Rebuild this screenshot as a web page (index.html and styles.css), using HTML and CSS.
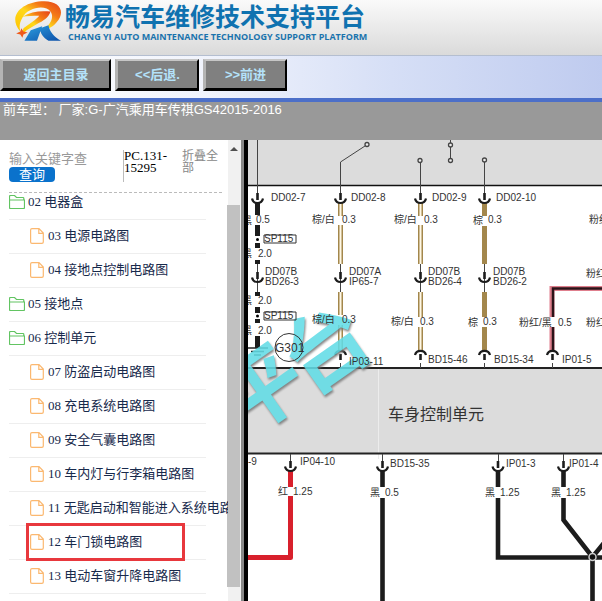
FILE: index.html
```html
<!DOCTYPE html>
<html lang="zh-CN">
<head>
<meta charset="utf-8">
<meta name="viewport" content="width=device-width, initial-scale=1">
<title>畅易汽车维修技术支持平台</title>
<link rel="stylesheet" href="styles.css">
</head>
<body>
<svg class="symbols" aria-hidden="true">
  <symbol id="folder" viewBox="0 0 16 14"><path d="M.5 12.500V1.500q0-1 1-1h4l2 2h6.500q.8 0 .8.800V5M.5 5h15v7.500q0 1-1 1H1.500q-1 0-1-1z" fill="none" stroke="#62c462" stroke-width="1.200"/></symbol>
  <symbol id="file" viewBox="0 0 14 16"><path d="M2 .6h7L13.300 5v9q0 1.400-1.400 1.400H2Q.6 15.400.6 14V2Q.6.6 2 .6zM8.800.8v4.500h4.400" fill="none" stroke="#fbb870" stroke-width="1.200"/></symbol>
</svg>

<header class="banner">
  <svg class="logo" viewBox="0 0 46 42" aria-hidden="true">
    <defs>
      <linearGradient id="flame" x1="0" y1="1" x2="1" y2="0">
        <stop offset="0" stop-color="#ffc400"/><stop offset=".45" stop-color="#ffd81a"/><stop offset=".7" stop-color="#f47a16"/><stop offset="1" stop-color="#e3401c"/>
      </linearGradient>
      <linearGradient id="sea" x1="0" y1="0" x2="1" y2="1">
        <stop offset="0" stop-color="#2ea0e0"/><stop offset="1" stop-color="#0b4fa8"/>
      </linearGradient>
    </defs>
    <path d="M7 30C-6 15 9 1 30 1c16 0 20 11 12 20-3 4-8 7-13 8 6-5 11-12 7-18C31 4 14 7 9 17c-3 5-3 9-2 13z" fill="url(#flame)"/>
    <path d="M9 16c8-5 17-6 27-5-2 6-7 9-13 12l-10 6-5 5 2-7 11-8c2-2 3-2 4-4-6 0-11 0-16 1z" fill="url(#flame)"/>
    <path d="M8 27l2 3 4 1-4 2-1 3-2-3-4-1 4-2z" fill="#ee5a1c"/>
    <path d="M17 29l11-4-5 14H11zM26 27l8-3c1 6 5 11 12 15H34c-5-3-8-7-8-12z" fill="url(#sea)"/>
  </svg>
  <div class="brand">
    <h1 class="brand-name">畅易汽车维修技术支持平台</h1>
    <p class="brand-sub">CHANG YI AUTO MAINTENANCE TECHNOLOGY SUPPORT PLATFORM</p>
  </div>
</header>

<nav class="toolbar">
  <button type="button" class="tool tool-wide">返回主目录</button>
  <button type="button" class="tool">&lt;&lt;后退.</button>
  <button type="button" class="tool">&gt;&gt;前进</button>
</nav>

<div class="model">前车型： 厂家:G-广汽乘用车传祺GS42015-2016</div>

<main class="workspace">
  <aside class="sidebar">
    <div class="tree">
      <form class="search">
        <div class="search-field">
          <input class="keyword" type="text" placeholder="输入关键字查" aria-label="输入关键字查询">
          <button type="button" class="query">查询</button>
        </div>
        <div class="code">PC.131-15295</div>
        <a class="fold" href="#">折叠全部</a>
      </form>
      <ul class="nodes">
        <li class="node node-first"><svg class="icon-folder"><use href="#folder"/></svg><a href="#">02 电器盒</a></li>
        <li class="node node-file"><svg class="icon-file"><use href="#file"/></svg><a href="#">03 电源电路图</a></li>
        <li class="node node-file"><svg class="icon-file"><use href="#file"/></svg><a href="#">04 接地点控制电路图</a></li>
        <li class="node"><svg class="icon-folder"><use href="#folder"/></svg><a href="#">05 接地点</a></li>
        <li class="node"><svg class="icon-folder"><use href="#folder"/></svg><a href="#">06 控制单元</a></li>
        <li class="node node-file"><svg class="icon-file"><use href="#file"/></svg><a href="#">07 防盗启动电路图</a></li>
        <li class="node node-file"><svg class="icon-file"><use href="#file"/></svg><a href="#">08 充电系统电路图</a></li>
        <li class="node node-file"><svg class="icon-file"><use href="#file"/></svg><a href="#">09 安全气囊电路图</a></li>
        <li class="node node-file"><svg class="icon-file"><use href="#file"/></svg><a href="#">10 车内灯与行李箱电路图</a></li>
        <li class="node node-file"><svg class="icon-file"><use href="#file"/></svg><a href="#">11 无匙启动和智能进入系统电路图</a></li>
        <li class="node node-file node-marked"><svg class="icon-file"><use href="#file"/></svg><a href="#">12 车门锁电路图</a></li>
        <li class="node node-file"><svg class="icon-file"><use href="#file"/></svg><a href="#">13 电动车窗升降电路图</a></li>
      </ul>
    </div>
    <div class="scrollbar" aria-hidden="true">
      <span class="scroll-up"></span>
      <span class="scroll-thumb"></span>
    </div>
  </aside>

  <section class="viewer">
    <svg class="diagram" viewBox="248 140 354 461" role="img" aria-label="车身控制单元电路图">
      <defs>
        <g id="socket"><path d="M0 0V7" stroke="#1c1c1c" stroke-width="2.600"/><path d="M-5.500 5.500Q-4.500 10 0 10T5.500 5.500" fill="none" stroke="#1c1c1c" stroke-width="2.200"/></g>
        <g id="plug"><path d="M-5.500 5Q-4.500 .8 0 .8T5.500 5" fill="none" stroke="#1c1c1c" stroke-width="2.200"/><path d="M0 4V10" stroke="#1c1c1c" stroke-width="2.600"/><path d="M0 13V18" stroke="#444"/></g>
      </defs>
      <rect x="248" y="140" width="354" height="45" fill="#dcdcdc"/>
      <rect x="248" y="368" width="354" height="85" fill="#dcdcdc"/>
      <path d="M378.500 369V459" stroke="#ececec"/>
      <path d="M248 185.500H602" stroke="#111" stroke-width="1.500"/>
      <path d="M248 368H602M248 453.500H602" stroke="#222" stroke-width="2"/>

      <g fill="none" stroke="#444">
        <path d="M257.500 140V193M365 146L340.500 162V193M420.500 162V193M484.500 162V193M450.500 140V143M450.500 147V158"/>
        <path d="M257.500 264V293M340.500 264V293M420.500 264V293M484.500 264V293"/>
        <path d="M290.500 454V461M382.500 454V461M498.500 454V461M563.500 454V461"/>
        <g fill="#eee" stroke-width="1.300"><circle cx="367" cy="144.500" r="2"/><circle cx="420" cy="160.500" r="2"/><circle cx="450.500" cy="145" r="2"/><circle cx="450.500" cy="160.500" r="2"/><circle cx="484.500" cy="160" r="2"/></g>
      </g>

      <path d="M257.500 202V215M257.500 225V236M257.500 243V248M257.500 260V264M257.500 292V296M257.500 307V313M257.500 319V323M257.500 336V348" stroke="#1c1c1c" stroke-width="5"/>
      <circle cx="257.500" cy="239.500" r="1.500"/><circle cx="257.500" cy="316" r="1.500"/>
      <path d="M248 348H268M251 351.500H264M254 355H261" stroke="#222" stroke-width="1.500"/>
      <g stroke-width="5" stroke="#a3874c">
        <path d="M340.500 203V216M340.500 225V264M420.500 203V216M420.500 225V264M340.500 292V315M340.500 325V351M420.500 292V317M420.500 327V351M484.500 203V216M484.500 226V264M484.500 292V317M484.500 327V351"/>
        <path d="M340.500 203V216M340.500 225V264M420.500 203V216M420.500 225V264M340.500 292V315M340.500 325V351M420.500 292V317M420.500 327V351" stroke="#fff8e4" stroke-width="2"/>
      </g>
      <path d="M602 288.500H552V317M552 327V351" fill="none" stroke="#df7f8d" stroke-width="5"/>
      <path d="M602 288.500H553V317M553 327V351" fill="none" stroke="#2b1419" stroke-width="2.500"/>
      <path d="M290.500 471V487M290.500 496V557.500H248" fill="none" stroke="#d8202c" stroke-width="5" stroke-linejoin="round"/>
      <g fill="none" stroke="#1c1c1c" stroke-width="4.600">
        <path d="M382.500 471V487M382.500 498V601M498 471V487M498 498V557.500H602M563.500 471V487M563.500 498V520L592.500 557V601M592.500 557L604 543"/>
      </g>
      <circle cx="592.500" cy="557" r="3.500" fill="#111" stroke="#ccc" stroke-width="1.500"/>
      <use href="#socket" x="257.500" y="193"/><use href="#socket" x="340.500" y="193"/><use href="#socket" x="420.500" y="193"/><use href="#socket" x="484.500" y="193"/>
      <use href="#socket" x="257.500" y="272"/><use href="#socket" x="340.500" y="272"/><use href="#socket" x="420.500" y="272"/><use href="#socket" x="484.500" y="272"/>
      <use href="#plug" x="340.500" y="350"/><use href="#plug" x="420.500" y="350"/><use href="#plug" x="484.500" y="350"/><use href="#plug" x="552.500" y="350"/>
      <use href="#socket" x="290.500" y="461"/><use href="#socket" x="382.500" y="461"/><use href="#socket" x="498" y="461"/><use href="#socket" x="563.500" y="461"/>

      <g class="watermark">
        <text transform="translate(260 388) rotate(-35)" x="-42" y="32">平</text>
        <text transform="translate(325 347) rotate(-35)" x="-42" y="32">台</text>
      </g>

      <path d="M264 235H296V243H264zM264 312H296V320H264z" fill="none" stroke="#333"/>
      <circle cx="289" cy="347.500" r="14" fill="none" stroke="#333"/>
      <g class="labels">
        <text x="271" y="201">DD02-7</text><text x="351" y="201">DD02-8</text><text x="432" y="201">DD02-9</text><text x="496" y="201">DD02-10</text>
        <text x="242" y="224">黑</text><text x="256" y="223">0.5</text>
        <text x="312" y="223">棕/白</text><text x="342" y="223">0.3</text>
        <text x="394" y="223">棕/白</text><text x="424" y="223">0.3</text>
        <text x="473" y="224">棕</text><text x="488" y="223">0.3</text>
        <text x="589" y="223">粉红</text>
        <text x="264" y="242">SP115</text>
        <text x="242" y="257">黑</text><text x="258" y="257">2.0</text>
        <text x="265" y="275">DD07B</text><text x="265" y="285">BD26-3</text>
        <text x="349" y="275">DD07A</text><text x="349" y="285">IP65-7</text>
        <text x="428" y="275">DD07B</text><text x="428" y="285">BD26-4</text>
        <text x="493" y="275">DD07B</text><text x="493" y="285">BD26-2</text>
        <text x="586" y="277">粉红</text>
        <text x="242" y="304">黑</text><text x="258" y="304">2.0</text>
        <text x="264" y="319">SP115</text>
        <text x="242" y="334">黑</text><text x="258" y="334">2.0</text>
        <text x="312" y="323">棕/白</text><text x="342" y="323">0.3</text>
        <text x="391" y="325">棕/白</text><text x="420" y="325">0.3</text>
        <text x="468" y="326">棕</text><text x="483" y="325">0.3</text>
        <text x="519" y="326">粉红/黑</text><text x="558" y="326">0.5</text><text x="586" y="326">粉红</text>
        <text x="349" y="365">IP03-11</text><text x="428" y="363">BD15-46</text><text x="494" y="363">BD15-34</text><text x="562" y="363">IP01-5</text>
        <text x="248" y="465">-9</text><text x="300" y="465">IP04-10</text><text x="390" y="467">BD15-35</text><text x="506" y="467">IP01-3</text><text x="569" y="467">IP01-4</text>
        <text x="278" y="495">红</text><text x="293" y="495">1.25</text>
        <text x="370" y="496">黑</text><text x="385" y="496">0.5</text>
        <text x="485" y="496">黑</text><text x="500" y="496">1.25</text>
        <text x="551" y="496">黑</text><text x="566" y="496">1.25</text>
        <text class="ground" x="275" y="352">G301</text>
        <text class="unit" x="388" y="420">车身控制单元</text>
      </g>
    </svg>
  </section>
</main>
</body>
</html>
```
FILE: styles.css
```css
*,
*::before,
*::after {
  box-sizing: border-box;
}

body {
  margin: 0;
  min-height: 100vh;
  display: flex;
  flex-direction: column;
  background: #fff;
  font-family: "Liberation Sans", "Noto Sans CJK SC", sans-serif;
  font-size: 13px;
}

.symbols {
  display: none;
}

.banner {
  display: flex;
  height: 56px;
  padding-left: 13px;
  background: linear-gradient(#fafafa, #dadada);
  border-bottom: 1px solid #b4bed0;
}

.logo {
  width: 48px;
  height: 44px;
}

.brand {
  padding: 3px 0 0 4px;
  white-space: nowrap;
}

.brand-name {
  margin: 0;
  font-size: 25px;
  line-height: 28px;
  color: #0f72b0;
}

.brand-sub {
  margin: 0;
  padding-left: 3px;
  font-family: "Open Sans", "Liberation Sans", sans-serif;
  font-size: 9px;
  font-weight: 700;
  line-height: 12px;
  color: #1a73ad;
}

.toolbar {
  display: flex;
  gap: 4px;
  height: 46px;
  padding-top: 3px;
  background: linear-gradient(90deg, #fff, #f0f3fc 35%, #d6dff6 65%, #bfcbef);
  border-bottom: 4px solid #4c6fc8;
}

.tool {
  width: 84px;
  height: 32px;
  padding: 0;
  border: solid;
  border-width: 2px 2px 3px 3px;
  border-color: #c6c6c6 #000 #000 #b4b4b4;
  background: #808080;
  color: #b4e2fa;
  font-family: inherit;
  font-size: 13px;
  font-weight: 700;
  line-height: 20px;
}

.tool-wide {
  width: 111px;
}

.model {
  height: 38px;
  padding: 0 3px;
  background: #999;
  color: #fff;
  line-height: 16px;
}

.workspace {
  flex: 1;
  display: flex;
}

.sidebar {
  flex: none;
  display: flex;
  width: 248px;
  border-right: 4px solid #000;
}

.tree {
  width: 228px;
  padding-left: 9px;
  overflow: hidden;
}

.search {
  display: flex;
  height: 53px;
  margin-right: 6px;
  padding-top: 10px;
  border-bottom: 1px dashed #bbb;
  font-family: "Liberation Serif", "Noto Sans CJK SC", serif;
  line-height: 12px;
}

.search-field {
  display: flex;
  flex-direction: column;
  align-items: flex-start;
  width: 114px;
  padding-top: 1px;
}

.keyword {
  width: 90px;
  height: 16px;
  padding: 0;
  border: 0;
  background: none;
  font-family: inherit;
  font-size: 13px;
}

.keyword::placeholder {
  color: #999;
}

.query {
  width: 46px;
  height: 15px;
  padding: 0;
  border: 0;
  border-radius: 4px;
  background: #0a72cc;
  color: #fff;
  font-family: inherit;
  font-size: 13px;
  line-height: 15px;
}

.code {
  width: 59px;
  height: 32px;
  padding-right: 10px;
  border-left: 1px solid #bbb;
}

.fold {
  width: 40px;
  font-size: 12px;
  color: #888;
  text-decoration: none;
}

.nodes {
  margin: 0 22px 0 0;
  padding: 0;
  list-style: none;
}

.node {
  position: relative;
  display: flex;
  align-items: center;
  gap: 3px;
  height: 34px;
  padding-bottom: 2px;
  border-bottom: 1px solid #eee;
  font-family: "Liberation Serif", "Noto Sans CJK SC", serif;
  white-space: nowrap;
}

.node a {
  color: #182a4c;
  line-height: 16px;
  text-decoration: none;
}

.node-first {
  height: 27px;
  padding-bottom: 8px;
}

.node-file {
  gap: 4px;
  padding-left: 21px;
}

.node-marked::after {
  content: "";
  position: absolute;
  top: -3px;
  left: 17px;
  width: 159px;
  height: 38px;
  border: 3px solid #e8383d;
}

.icon-folder {
  flex: none;
  width: 16px;
  height: 14px;
}

.icon-file {
  flex: none;
  width: 14px;
  height: 16px;
}

.scrollbar {
  display: flex;
  flex-direction: column;
  align-items: center;
  width: 16px;
  padding: 7px 2px 14px 0;
  background: #f1f1f1;
  border-right: 3px solid #888;
}

.scroll-up {
  border: 4px solid transparent;
  border-top: 0;
  border-bottom: 4px solid #505050;
}

.scroll-thumb {
  flex: 1;
  width: 13px;
  margin-top: 54px;
  background: #c1c1c1;
}

.viewer {
  flex: 1;
  min-width: 0;
  overflow: hidden;
}

.diagram {
  display: block;
  width: 100%;
  height: auto;
}

.labels {
  font-size: 10px;
  fill: #333;
}

.labels .ground {
  font-size: 12px;
}

.labels .unit {
  font-size: 16px;
}

.watermark {
  font-size: 84px;
  font-weight: 700;
  fill: #62dce6;
  opacity: 0.88;
  filter: drop-shadow(1px 2px 1px #777);
}
```
